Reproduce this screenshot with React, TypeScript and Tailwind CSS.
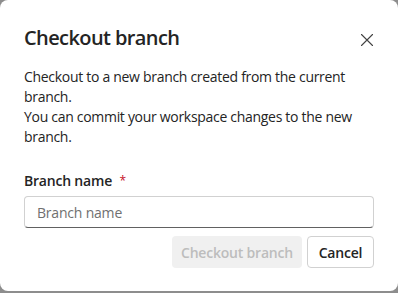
import React from 'react';

const font = { fontFamily: '"Open Sans", "Noto Sans", sans-serif' };

const CloseIcon: React.FC = () => (
  <svg width="20" height="20" viewBox="0 0 20 20" fill="none">
    <path d="M4.5 4.5L15.5 15.5M15.5 4.5L4.5 15.5" stroke="#424242" strokeWidth="1.1" strokeLinecap="round" />
  </svg>
);

const App: React.FC = () => {
  return (
    <div className="w-[398px] h-[293px] bg-[#8d8d8d]" style={font}>
      <div className="w-[398px] h-[291px] bg-white rounded-lg px-6 pt-6 flex flex-col text-[#242424]">
        <div className="flex items-start justify-between">
          <h2 className="text-[20px] leading-7 font-semibold tracking-[-0.6px]">Checkout branch</h2>
          <button className="w-6 h-6 mt-[4px] -mr-[5px] flex items-center justify-center">
            <CloseIcon />
          </button>
        </div>
        <p className="mt-[15px] text-[14px] leading-5 tracking-[-0.3px]">
          Checkout to a new branch created from the current branch.
          <br />
          You can commit your workspace changes to the new branch.
        </p>
        <label className="mt-6 text-[14px] leading-5 font-semibold tracking-[-0.2px]">
          Branch name <span className="pl-1 text-[12px] text-[#c50f1f] font-normal align-top">*</span>
        </label>
        <div className="mt-[5px] h-8 rounded border border-[#d1d1d1] border-b-[#616161] flex items-center px-3">
          <span className="text-[14px] text-[#707070] tracking-[-0.2px]">Branch name</span>
        </div>
        <div className="mt-2 flex justify-end gap-[5px]">
          <button className="h-8 w-[130px] rounded bg-[#f0f0f0] text-[#bdbdbd] text-[14px] font-semibold tracking-[-0.2px]">
            Checkout branch
          </button>
          <button className="h-8 w-[67px] rounded border border-[#d1d1d1] bg-white text-[#242424] text-[14px] font-semibold tracking-[-0.2px]">
            Cancel
          </button>
        </div>
      </div>
    </div>
  );
};

export default App;
